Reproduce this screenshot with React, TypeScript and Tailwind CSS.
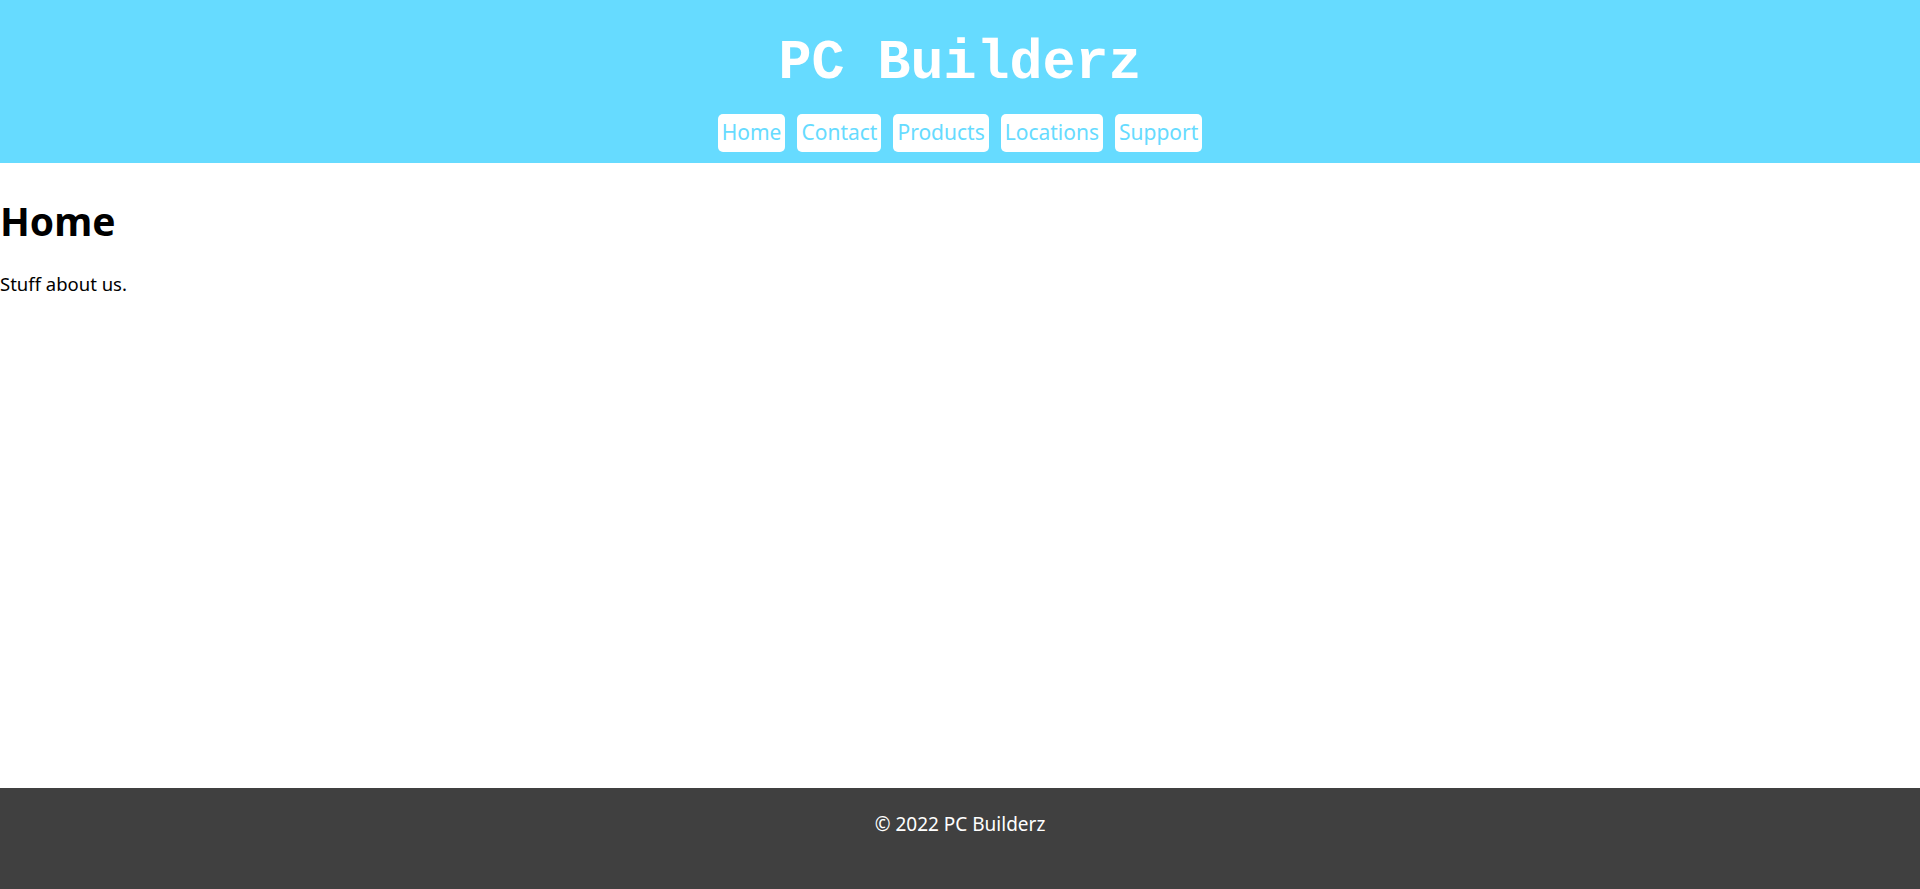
const NAV = ["Home", "Contact", "Products", "Locations", "Support"];

export default function App() {
  return (
    <div className="flex min-h-[889px] flex-col bg-white font-['Noto_Sans',sans-serif] text-black">
      <header className="flex h-[163px] flex-col items-center bg-[#66dbff]">
        <h1 className="mt-[36px] font-['Liberation_Mono',monospace] text-[55px] font-bold leading-[55px] text-white">
          PC Builderz
        </h1>
        <nav className="mt-[23px] flex gap-[12px]">
          {NAV.map((item) => (
            <a
              key={item}
              href="#"
              className="flex h-[38px] items-center rounded-[5px] bg-white px-[4px] text-[21px] text-[#66dbff]"
            >
              {item}
            </a>
          ))}
        </nav>
      </header>

      <main className="flex-1">
        <h2 className="mt-[34px] text-[39px] font-bold leading-[48px]">Home</h2>
        <p className="mt-[26px] text-[18.5px] leading-[26px]">Stuff about us.</p>
      </main>

      <footer className="h-[101px] bg-[#404040] pt-[22px] text-center text-[19px] text-white">
        © 2022 PC Builderz
      </footer>
    </div>
  );
}
